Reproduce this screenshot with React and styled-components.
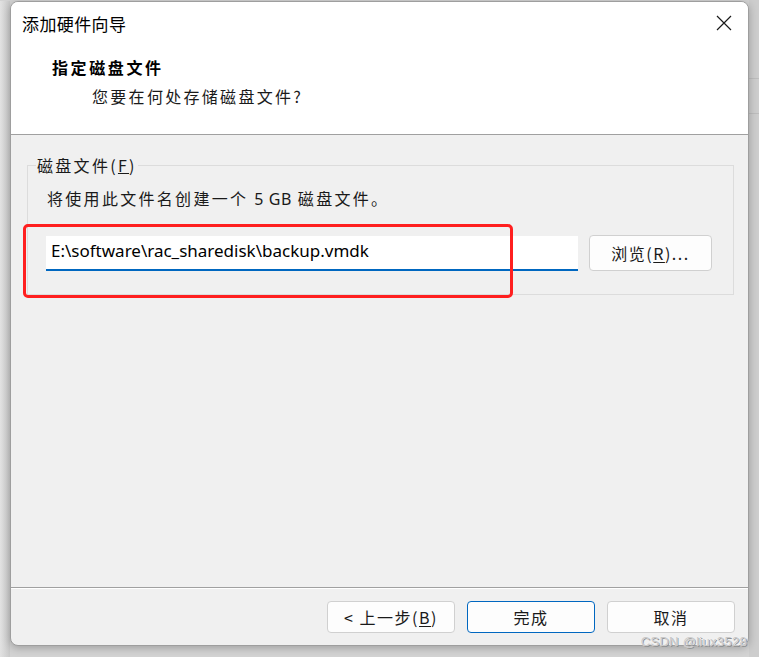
import React from "react";
import styled, { createGlobalStyle } from "styled-components";

const Global = createGlobalStyle`
  html, body { margin: 0; padding: 0; }
  body {
    width: 759px;
    height: 657px;
    overflow: hidden;
    background: #d3d3d3;
    font-family: "Noto Sans", "Noto Sans CJK SC", sans-serif;
    color: #1a1a1a;
  }
`;

const Page = styled.div`
  display: flex;
  width: 759px;
  height: 657px;
  padding-top: 1px;
  box-sizing: border-box;
  position: relative;
`;

const LeftStrip = styled.div`
  width: 10px;
  flex: none;
  background: linear-gradient(to right, #e2e2e2, #c9c9c9);
`;

const RightStrip = styled.div`
  flex: 1;
  margin-top: -1px;
  background: #cdcdcd;
  display: flex;
  flex-direction: column;
`;

const StripLine = styled.div`
  height: ${(p) => p.h}px;
  flex: none;
  border-bottom: 1px solid #bdbdbd;
`;

const Dialog = styled.div`
  width: 739px;
  height: 645px;
  flex: none;
  display: flex;
  flex-direction: column;
  border: 1px solid #9e9e9e;
  border-radius: 8px;
  box-sizing: border-box;
  overflow: hidden;
  background: #f0f0f0;
  box-shadow: 0 2px 8px rgba(0, 0, 0, 0.25);
  position: relative;
`;

const Header = styled.div`
  height: 133px;
  flex: none;
  background: #ffffff;
  border-bottom: 1px solid #a0a0a0;
  box-sizing: border-box;
`;

const TitleBar = styled.div`
  display: flex;
  align-items: center;
  justify-content: space-between;
  height: 42px;
  padding: 0 16px 0 11px;
`;

const Title = styled.div`
  font-family: "Noto Sans CJK SC", sans-serif;
  font-size: 17px;
  letter-spacing: 0.4px;
  color: #000;
`;

const Close = styled.div`
  width: 17px;
  height: 17px;
  display: flex;
  align-items: center;
  justify-content: center;
`;

const Heading = styled.div`
  margin: 12px 0 0 41px;
  font-family: "Noto Sans CJK SC", sans-serif;
  font-weight: 700;
  font-size: 16px;
  letter-spacing: 2.6px;
  line-height: 22px;
  color: #000;
`;

const SubHeading = styled.div`
  margin: 7px 0 0 81px;
  font-family: "Noto Sans CJK SC", sans-serif;
  font-size: 16px;
  letter-spacing: 2.3px;
  line-height: 22px;
  color: #1a1a1a;
`;

const Body = styled.div`
  flex: 1;
  padding: 29px 14px 0 16px;
`;

const Group = styled.fieldset`
  margin: 0;
  padding: 0 21px 21px 19px;
  border: 1px solid #dcdcdc;
  height: 140px;
  box-sizing: border-box;
  margin-top: -9px;
`;

const Legend = styled.legend`
  padding: 0 1px;
  margin-left: -11px;
  font-family: "Noto Sans CJK SC", sans-serif;
  font-size: 16px;
  letter-spacing: 2.3px;
  line-height: 20px;
  color: #1a1a1a;
`;

const Hint = styled.div`
  font-family: "Noto Sans CJK SC", sans-serif;
  font-size: 16px;
  letter-spacing: 2.3px;
  line-height: 22px;
  margin-top: 12px;
  color: #1a1a1a;
  b {
    font-family: "Noto Sans", sans-serif;
    font-weight: 400;
    letter-spacing: 0.6px;
  }
`;

const Row = styled.div`
  display: flex;
  align-items: center;
  gap: 11px;
  margin-top: 25px;
`;

const PathInput = styled.div`
  width: 532px;
  height: 35px;
  flex: none;
  box-sizing: border-box;
  background: #fff;
  border-bottom: 2px solid #0067c0;
  padding: 0 5px 3px;
  display: flex;
  align-items: center;
  font-family: "Noto Sans", sans-serif;
  font-size: 17px;
  color: #000;
  margin-left: -1px;
`;

const Button = styled.div`
  width: ${(p) => p.w || 128}px;
  height: ${(p) => p.h || 32}px;
  flex: none;
  box-sizing: border-box;
  border: 1px solid ${(p) => (p.primary ? "#0067c0" : "#d0d0d0")};
  border-radius: 4px;
  background: #fdfdfd;
  display: flex;
  align-items: center;
  justify-content: center;
  font-family: "Noto Sans CJK SC", sans-serif;
  font-size: 16px;
  letter-spacing: 1.5px;
  color: #1a1a1a;
  u {
    text-decoration: underline;
    text-underline-offset: 2px;
  }
`;

const Footer = styled.div`
  height: 58px;
  flex: none;
  border-top: 1px solid #a0a0a0;
  box-shadow: inset 0 1px 0 #ffffff;
  box-sizing: border-box;
  display: flex;
  justify-content: flex-end;
  align-items: flex-start;
  gap: 12px;
  padding: 13px 13px 0 0;
`;

const Highlight = styled.div`
  position: absolute;
  left: 12px;
  top: 222px;
  width: 490px;
  height: 74px;
  box-sizing: border-box;
  border: 3px solid #ff1f1f;
  border-radius: 5px;
  pointer-events: none;
`;

const Watermark = styled.div`
  position: absolute;
  right: 12px;
  top: 634px;
  font-family: "Liberation Sans", sans-serif;
  font-size: 13px;
  line-height: 16px;
  color: #c8c8c8;
  text-shadow: 0 0 1px #fff, 1px 1px 0 #8a8a8a;
  letter-spacing: 0.3px;
`;

export default function App() {
  return (
    <>
      <Global />
      <Page>
        <LeftStrip />
        <Dialog>
          <Header>
            <TitleBar>
              <Title>添加硬件向导</Title>
              <Close>
                <svg width="16" height="16" viewBox="0 0 16 16">
                  <path d="M1 1 L15 15 M15 1 L1 15" stroke="#1a1a1a" strokeWidth="1.2" fill="none" />
                </svg>
              </Close>
            </TitleBar>
            <Heading>指定磁盘文件</Heading>
            <SubHeading>您要在何处存储磁盘文件?</SubHeading>
          </Header>
          <Body>
            <Group>
              <Legend>
                磁盘文件(<u>F</u>)
              </Legend>
              <Hint>
                将使用此文件名创建一个 <b>5 GB</b> 磁盘文件。
              </Hint>
              <Row>
                <PathInput>E:\software\rac_sharedisk\backup.vmdk</PathInput>
                <Button w={123} h={36}>
                  浏览(<u>R</u>)...
                </Button>
              </Row>
            </Group>
          </Body>
          <Footer>
            <Button>
              &lt; 上一步(<u>B</u>)
            </Button>
            <Button primary>完成</Button>
            <Button>取消</Button>
          </Footer>
          <Highlight />
        </Dialog>
        <RightStrip>
          <StripLine h={78} />
          <StripLine h={34} />
        </RightStrip>
        <Watermark>CSDN @liux3528</Watermark>
      </Page>
    </>
  );
}
